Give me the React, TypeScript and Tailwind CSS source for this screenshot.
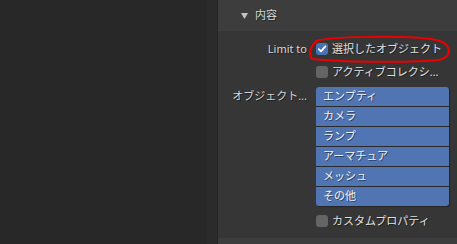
import React from "react";

const font = { fontFamily: '"Noto Sans", "Noto Sans CJK JP", sans-serif' };

function Check({ on }: { on?: boolean }) {
  return on ? (
    <div className="w-[12px] h-[12px] rounded-[3px] bg-[#4772b3] flex items-center justify-center shrink-0">
      <svg width="10" height="10" viewBox="0 0 10 10">
        <path d="M1.8 5.2 L4 7.4 L8.4 2.4" fill="none" stroke="#ffffff" strokeWidth="1.8" strokeLinecap="round" strokeLinejoin="round" />
      </svg>
    </div>
  ) : (
    <div className="w-[12px] h-[12px] rounded-[3px] bg-[#646464] shrink-0" />
  );
}

const items = ["エンプティ", "カメラ", "ランプ", "アーマチュア", "メッシュ", "その他"];

export default function App() {
  return (
    <div
      className="relative w-[457px] h-[244px] flex bg-[#282828] overflow-hidden text-[11px] [text-shadow:1px_1px_0_rgba(0,0,0,0.45)]"
      style={font}
    >
      <div className="w-[207px] h-full bg-[#282828]" />
      <div className="w-[10px] h-full bg-[#2b2b2b]" />
      <div className="flex-1 h-full flex flex-col border-l border-[#242424]">
        <div className="h-[31px] bg-[#3d3d3d] flex items-center pl-[23px] gap-[7px] text-[#d8d8d8]">
          <svg width="7" height="6" viewBox="0 0 7 6">
            <polygon points="0,0 7,0 3.5,6" fill="#c4c4c4" />
          </svg>
          <span>内容</span>
        </div>
        <div className="flex-1 bg-[#363636] pt-[8px] flex flex-col">
          <div className="flex h-[20px] items-center">
            <div className="w-[89px] text-right text-[#d4d4d4] pr-0">Limit to</div>
            <div className="ml-[9px] flex items-center gap-[4px] text-[#e0e0e0]">
              <Check on />
              <span>選択したオブジェクト</span>
            </div>
          </div>
          <div className="flex h-[20px] items-center mt-[3px]">
            <div className="w-[89px]" />
            <div className="ml-[9px] flex items-center gap-[4px] text-[#e0e0e0]">
              <Check />
              <span>アクティブコレクシ…</span>
            </div>
          </div>
          <div className="flex mt-[5px]">
            <div className="w-[89px] text-right text-[#d4d4d4] h-[19px] flex items-center justify-end">オブジェクト…</div>
            <div className="ml-[9px] w-[133px] flex flex-col gap-[1px] bg-[#2a2a2a] rounded-[3px] shadow-[1px_1px_1px_rgba(0,0,0,0.35)]">
              {items.map((t, i) => (
                <div
                  key={t}
                  className={
                    "h-[19px] bg-[#5075b2] text-[#f2f2f2] flex items-center pl-[7px] " +
                    (i === 0 ? "rounded-t-[3px]" : i === items.length - 1 ? "rounded-b-[3px]" : "")
                  }
                >
                  {t}
                </div>
              ))}
            </div>
          </div>
          <div className="flex h-[20px] items-center mt-[5px]">
            <div className="w-[89px]" />
            <div className="ml-[9px] flex items-center gap-[4px] text-[#e0e0e0]">
              <Check />
              <span>カスタムプロパティ</span>
            </div>
          </div>
        </div>
        <div className="h-[6px] bg-[#3d3d3d]" />
      </div>
      <svg className="absolute left-0 top-0 pointer-events-none" width="457" height="244" viewBox="0 0 457 244">
        <path
          d="M316 41 C330 36, 420 35, 440 41 C452 45, 452 58, 438 60 C410 63, 340 62, 312 59 C309 55, 309 45, 319 40"
          fill="none"
          stroke="#ee0000"
          strokeWidth="2"
          strokeLinecap="round"
        />
      </svg>
    </div>
  );
}
